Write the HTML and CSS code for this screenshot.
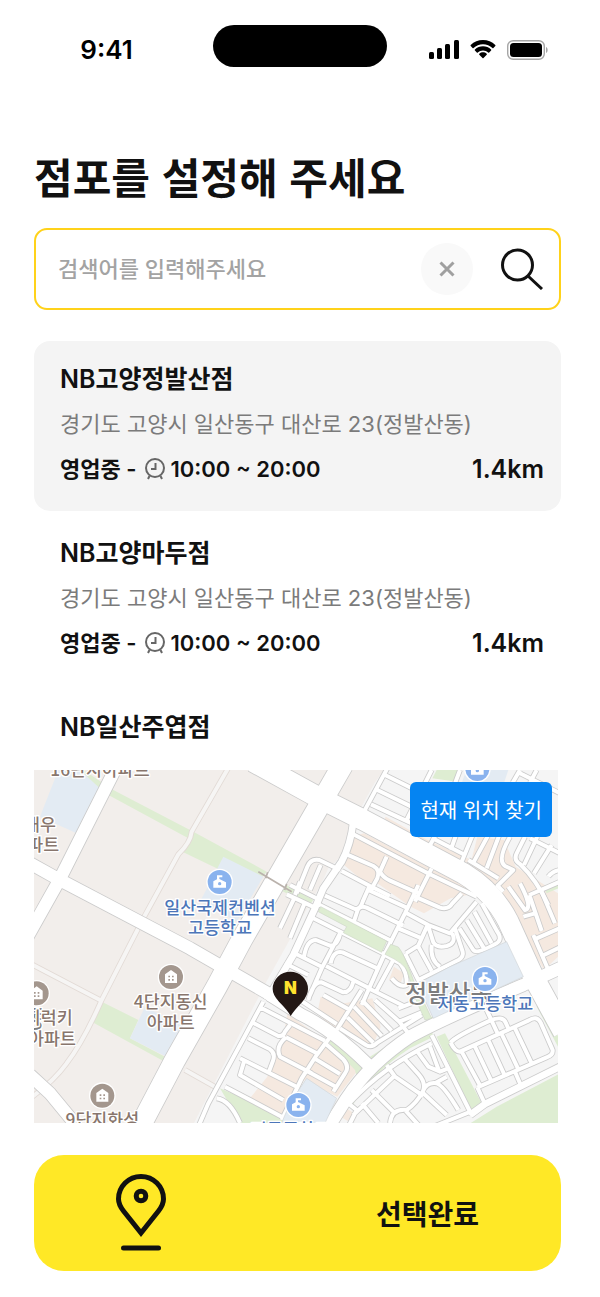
FILE: index.html
```html
<!DOCTYPE html>
<html lang="ko">
<head>
    <meta charset="UTF-8">
    <meta name="viewport" content="width=device-width, initial-scale=1.0">
    <title>점포 설정</title>
    <link rel="stylesheet" href="styles.css">
</head>
<body>

    <header class="status-bar">
        <span class="time">9:41</span>
        <span class="island"></span>
        <span class="status-icons">
            <svg width="30" height="20" viewBox="0 0 30 20">
                <rect x="0" y="12" width="5" height="7" rx="1.5"/>
                <rect x="8" y="8" width="5" height="11" rx="1.5"/>
                <rect x="16" y="4" width="5" height="15" rx="1.5"/>
                <rect x="25" y="0" width="5" height="19" rx="1.5"/>
            </svg>
            <svg width="26" height="20" viewBox="0 0 26 20">
                <path d="M13 4.2c3.6 0 6.900 1.400 9.400 3.700.3.300.7.300 1 0l1.900-1.900c.3-.3.3-.8 0-1.100C22 1.800 17.700 0 13 0S4 1.800.7 4.900c-.3.3-.3.800 0 1.100l1.900 1.900c.3.300.7.300 1 0C6.100 5.600 9.400 4.200 13 4.200z"/>
                <path d="M13 10.400c2 0 3.800.7 5.200 2 .3.300.7.300 1 0l1.900-1.900c.3-.3.3-.8 0-1.100C18.900 7.400 16.100 6.200 13 6.200S7.100 7.400 4.900 9.400c-.3.3-.3.800 0 1.100l1.900 1.900c.3.300.7.300 1 0 1.400-1.300 3.200-2 5.200-2z"/>
                <path d="M16.700 13.700c.3.300.3.800 0 1.100L13.500 18c-.3.300-.7.300-1 0l-3.200-3.200c-.3-.3-.3-.8 0-1.100 2.100-1.800 5.300-1.800 7.400 0z"/>
            </svg>
            <svg width="41" height="20" viewBox="0 0 41 20">
                <rect x="0.7" y="0.7" width="36.600" height="18.600" rx="5.500" fill="none" stroke="#a6a6a6" stroke-width="1.400"/>
                <rect x="3" y="3" width="32" height="14" rx="3.500"/>
                <path d="M39 7c2.200.8 2.200 5.200 0 6z" fill="#a6a6a6"/>
            </svg>
        </span>
    </header>

    <main class="page">
        <h1>점포를 설정해 주세요</h1>

        <form class="search">
            <input type="text" placeholder="검색어를 입력해주세요" aria-label="점포 검색">
            <button type="reset" class="clear" aria-label="지우기">
                <svg width="16" height="16" viewBox="0 0 16 16"><path d="M1.500 1.500l13 13M14.500 1.500l-13 13"/></svg>
            </button>
            <button type="submit" class="find" aria-label="검색">
                <svg width="42" height="42" viewBox="0 0 42 42"><circle cx="16.500" cy="17" r="15"/><path d="M27 28L41 41"/></svg>
            </button>
        </form>

        <ul class="stores">
            <li class="store selected">
                <h2>NB고양정발산점</h2>
                <p class="address">경기도 고양시 일산동구 대산로 23(정발산동)</p>
                <p class="info">
                    <span>영업중 -</span>
                    <svg class="clock" width="20" height="22" viewBox="0 0 20 22"><circle cx="10" cy="10" r="9"/><path d="M10.500 5v6H6M4.500 18l-1.500 3M15.500 18l1.500 3"/></svg>
                    <span>10:00 ~ 20:00</span>
                    <strong class="distance">1.4km</strong>
                </p>
            </li>
            <li class="store">
                <h2>NB고양마두점</h2>
                <p class="address">경기도 고양시 일산동구 대산로 23(정발산동)</p>
                <p class="info">
                    <span>영업중 -</span>
                    <svg class="clock" width="20" height="22" viewBox="0 0 20 22"><circle cx="10" cy="10" r="9"/><path d="M10.500 5v6H6M4.500 18l-1.500 3M15.500 18l1.500 3"/></svg>
                    <span>10:00 ~ 20:00</span>
                    <strong class="distance">1.4km</strong>
                </p>
            </li>
            <li class="store">
                <h2>NB일산주엽점</h2>
            </li>
        </ul>

        <section class="map">
            <svg viewBox="0 0 1572 1059" preserveAspectRatio="xMidYMid slice" role="img" aria-label="점포 지도">
                <defs>
                    <g id="lanes">
                        <path transform="translate(-12 -15)" d="M600 0L485 200Q482 232 445 268L340 460L215 705Q160 830 110 895Q70 950 0 1000M0 595L210 705M465 915L560 968"/>
                    </g>
                    <g id="streets">
                        <!-- north -->
                        <g transform="translate(768 0)">
                            <path d="M292 -5L222 125M285 15L400 72M262 60L375 115M243 103L365 160M425 0L350 150"/>
                            <path d="M690 0L668 38M690 10L810 70M740 0L720 38M510 0L495 40"/>
                            <path d="M440 190L412 240M425 203L525 255M500 190L482 240M548 195L515 275M535 270L625 325M595 195L550 278M628 195L590 295M660 200Q620 270 645 288L670 300L620 350"/>
                            <path d="M705 200L680 250Q670 270 690 282Q740 330 775 405M742 200L702 285M720 205L810 250M785 225L732 310M775 320Q790 300 815 300"/>
                            <path d="M190 193L418 312L560 380M425 295L375 395M170 253L250 288Q272 300 262 325L240 365M290 260L270 305Q278 322 300 332L390 372M155 303L240 348L300 378M20 370L52 290Q62 265 88 270L150 300M92 285L60 360"/>
                        </g>
                        <!-- middle -->
                        <g transform="translate(768 345)">
                            <path d="M105 32L195 72Q212 72 218 50L238 5M228 12L355 70M190 115L203 75Q210 60 230 68L340 122M85 58L305 168M70 100L285 208M385 0L345 85L280 215L215 360"/>
                            <path d="M345 82L415 120L480 145L560 50M325 130L395 160M412 122L385 182L348 205M368 32L450 68Q475 75 487 55L515 25M415 125L430 172Q440 190 470 183Q500 175 487 145"/>
                            <path d="M345 205L385 285L505 225Q522 215 518 200L495 130M385 185L425 258M425 180Q420 225 450 245M508 130L550 195Q560 208 615 178Q640 165 622 140L575 55M530 105L582 190M553 80L605 175"/>
                            <path d="M42 215Q50 165 78 165L120 182Q142 182 150 148M150 145L95 250L60 330M5 200L95 245M122 235Q130 195 158 202L262 250M108 243L235 308M55 345Q70 290 95 292L160 322Q182 322 190 290M-15 235L55 270"/>
                            <path d="M285 210L330 235Q352 262 350 300Q330 310 305 280M310 225L258 320M240 312L340 362"/>
                            <path d="M-10 28L75 68M45 52L0 160M15 35L-30 130M0 0L90 45M30 -10L15 30"/>
                            <path d="M620 0L640 20M655 5L705 75Q730 70 690 -5M730 150L775 255M718 30L755 138M718 30L810 -10M755 20L795 115M740 160L820 125M762 210L820 182M735 85L700 95"/>
                        </g>
                        <!-- south -->
                        <g transform="translate(618 690)">
                            <path d="M70 5L0 135L-95 310L-125 380M60 22L255 122M42 70L115 108Q130 110 135 95L150 75M138 112L235 162M25 115L90 148Q108 160 98 185L85 220M138 112Q105 140 120 170L215 220M0 175L170 260M12 185L0 225L130 300M-45 260L125 350M-70 295Q-30 300 0 369"/>
                            <path d="M275 105L230 165L185 235L125 360M255 130L310 178Q330 200 315 220L280 275M228 178L300 222M205 215L290 262M180 0L290 72M365 -30L290 90M330 30L250 -15"/>
                            <path d="M300 85L378 135Q395 145 412 128L545 45M322 52L400 128M342 20L425 108M365 0L455 92M405 0L478 65L505 100M475 25L540 0M478 65L550 35"/>
                            <path d="M575 105L620 195L695 345M632 128Q645 110 750 62Q790 45 798 70L808 92M632 128Q645 155 660 155L865 62Q890 45 902 68L938 150Q940 165 920 172L712 262M740 30L775 105M665 155L722 260M705 140L755 245M745 120L795 228M785 102L835 208M825 85L875 190M712 262L735 312M825 215L845 262"/>
                            <path d="M330 308Q430 200 575 130M440 195L465 230L550 288M490 172L535 222Q560 250 548 275M532 155L565 200L600 215L625 205M570 140L598 215M463 228L340 345M395 270L460 335M365 310L415 369M325 310L350 330L325 380M450 369Q455 325 500 330Q530 310 548 275Q560 245 590 250Q610 255 655 330M495 330L540 380M550 280L620 345M585 250L620 230M692 335L580 380"/>
                        </g>
                    </g>
                    <g id="roads">
                        <path transform="translate(768 0)" d="M190 155Q182 225 155 275L100 355L75 415L10 555L-70 690"/>
                        <path transform="translate(618 690)" d="M690 345L735 312L970 195"/>
                    </g>
                    <g id="avenues">
                        <path transform="translate(-12 -15)" d="M262 0L88 345L-10 520M0 295L90 345L480 550L740 700M0 930L60 985L130 1070"/>
                        <path transform="translate(768 510)" d="M-60 165L30 222Q130 270 235 375M110 570L170 475Q240 370 360 290Q460 235 700 135L820 80"/>
                    </g>
                    <g id="highways">
                        <path transform="translate(-12 -15)" d="M938 0L870 118L635 525L560 665L434 887L330 1085M670 -10L870 100"/>
                        <path transform="translate(768 -15)" d="M90 100L220 165L420 272L520 325Q610 380 655 470L730 635L820 800"/>
                    </g>
                    <g id="school">
                        <circle r="40" fill="#fff"/>
                        <circle r="36" fill="#8ab3ee"/>
                        <path d="M-19 17V-2L-8 -8V-20H8V-14H-1V-9L19 1V17Z" fill="#fff"/>
                        <circle cy="5" r="5" fill="#8ab3ee"/>
                    </g>
                    <g id="apartment">
                        <circle r="40" fill="#fff"/>
                        <circle r="36" fill="#a4978e"/>
                        <path d="M-18 18V-8L0 -21L18 -8V18Z" fill="#fff"/>
                        <path d="M-8 -4h5v5h-5zM3 -4h5v5h-5zM-8 6h5v5h-5zM3 6h5v5h-5z" fill="#a4978e"/>
                    </g>
                </defs>

                <rect width="1572" height="1059" fill="#f2eeeb"/>
                <path d="M950 135L870 325L700 630L480 1059H1572V0H1050Z" fill="#f5f5f5"/>
                <path d="M905 0H1043L980 115L905 75Z" fill="#f2eeeb"/>
                <path d="M880 130L948 165L925 245Q900 290 890 280L820 250Z" fill="#f2eeeb"/>

                <!-- shops -->
                <g fill="#f5e9e0">
                    <path d="M1055 140L1180 210L1400 310L1370 350L1040 170Z"/>
                    <path d="M990 190L1330 370L1250 385L1170 430L1130 410L1030 340L990 335L930 285L950 200Z"/>
                    <path d="M1310 280L1330 200L1410 210L1445 290L1572 370V520L1500 560L1370 350Z"/>
                    <path d="M860 680L930 700L1015 685L1040 770L1015 830L980 820L900 780L850 730Z"/>
                    <path d="M1080 590L1110 610L1100 640L1065 630Z"/>
                    <path d="M760 730L980 890L910 980L810 930L750 1040L648 985L700 920L715 860L750 790Z"/>
                    <path d="M930 1010L960 1030L945 1055L920 1040Z"/>
                    <path d="M1460 480L1572 510V560L1530 600Z"/>
                </g>
                <!-- parks -->
                <g fill="#deedd2">
                    <path transform="translate(-12 -15)" d="M160 15L250 75L490 200L710 320L695 338L560 310L460 262L475 220L245 95L150 45ZM760 355L850 405L840 420L750 375ZM215 710L325 765L300 820L405 875L400 888L185 770ZM570 970L745 1045L790 1090H640Z"/>
                    <path transform="translate(768 510)" d="M440 290L465 280L575 490L545 515ZM525 560L620 500L820 395V560ZM745 170L820 320V350L740 200ZM780 80L820 60V75Z"/>
                    <path transform="translate(768 510)" d="M185 500Q245 400 360 325L430 290L425 270L350 310Q240 370 165 490ZM125 295L220 380L200 410L195 390L115 305ZM240 350L405 245L440 220L580 200L450 265L250 365Z"/>
                    <path d="M1208 0H1273L1268 35L1195 25ZM1533 360L1573 330V355L1538 370Z"/>
                </g>
                <!-- school grounds -->
                <g fill="#e3ebf3">
                    <path transform="translate(-12 -15)" d="M85 15H150L215 75L140 205L30 155ZM580 275L700 335L620 470L510 410ZM345 725L470 790L410 875L300 820Z"/>
                    <path d="M1303 -15H1428L1408 45L1283 40Z"/>
                </g>

                <use href="#lanes" class="lane-edge"/>
                <use href="#lanes" class="lane"/>
                <use href="#streets" class="street-edge"/>
                <use href="#roads" class="road-edge"/>
                <use href="#avenues" class="avenue-edge"/>
                <use href="#highways" class="highway-edge"/>
                <use href="#streets" class="street"/>
                <use href="#roads" class="road"/>
                <use href="#avenues" class="avenue"/>
                <use href="#highways" class="highway"/>

                <!-- park between the blocks -->
                <g class="park" transform="translate(768 345)">
                    <path d="M92 65L290 168L275 202L160 143L170 125L85 80Z"/>
                    <path d="M302 178L325 186Q342 205 372 290L425 400L405 405L380 350L352 260Q345 235 285 208Z"/>
                </g>
                <g class="school-ground">
                    <path transform="translate(768 510)" d="M395 125L480 80L650 5L700 110L430 235L400 170ZM50 415L140 475L100 560H-30L0 490Z"/>
                </g>
                <path d="M673 305L773 365M695 325l6 -18M752 360l6 -18" fill="none" stroke="#bab2ac" stroke-width="5"/>

                <text class="label area" x="1244" y="695">정발산동</text>
                <text class="label area" x="0" y="772">동</text>

                <use href="#school" x="557" y="336"/>
                <use href="#school" x="1330" y="-3"/>
                <use href="#school" x="1353" y="627"/>
                <use href="#school" x="793" y="1005"/>
                <use href="#apartment" x="411" y="621"/>
                <use href="#apartment" x="8" y="670"/>
                <use href="#apartment" x="205" y="977"/>

                <g class="label blue">
                    <text x="558" y="432">일산국제컨벤션</text>
                    <text x="558" y="493">고등학교</text>
                    <text x="1354" y="721">저동고등학교</text>
                    <text x="770" y="1097">저동중학교</text>
                </g>
                <g class="label brown">
                    <text x="198" y="18">16단지아파트</text>
                    <text x="18" y="182">대우</text>
                    <text x="4" y="243">아파트</text>
                    <text x="410" y="715">4단지동신</text>
                    <text x="410" y="776">아파트</text>
                    <text x="44" y="762">지럭키</text>
                    <text x="54" y="824">아파트</text>
                    <text x="205" y="1069">9단지화성</text>
                </g>

                <path d="M770 738Q762 722 735 695Q716 675 716 657A53 52 0 0 1 822 657Q822 675 804 697Q780 722 770 738Z" fill="#231815"/>
                <text class="pin-text" x="769" y="673">N</text>
            </svg>
            <button type="button" class="locate">현재 위치 찾기</button>
        </section>

        <button type="button" class="confirm">
            <svg width="50" height="78" viewBox="0 0 50 78">
                <path d="M25 59L7.500 37C4 32.500 2.500 29 2.500 25a22.500 22.500 0 0 1 45 0c0 4-1.500 7.500-5 12z"/>
                <circle cx="25" cy="22" r="4.800"/>
                <path d="M7.500 74h35"/>
            </svg>
            <span>선택완료</span>
        </button>
    </main>

</body>
</html>
```
FILE: styles.css
```css
* {
    box-sizing: border-box;
}
body {
    margin: 0;
    background: #fff;
    color: #111;
    font-family: Inter, "Noto Sans CJK KR", sans-serif;
}
h1, h2, p, ul {
    margin: 0;
    padding: 0;
}
button {
    padding: 0;
    border: none;
    background: none;
    color: inherit;
    font-family: inherit;
    cursor: pointer;
}
svg {
    display: block;
    flex-shrink: 0;
}

/* status bar */
.status-bar {
    display: grid;
    grid-template-columns: 1fr 174px 1fr;
    align-items: center;
    padding-top: 25px;
}
.time {
    padding-top: 8px;
    text-align: center;
    font-size: 26px;
    line-height: 34px;
    font-weight: 600;
    color: #000;
}
.island {
    height: 42px;
    border-radius: 21px;
    background: #000;
}
.status-icons {
    display: flex;
    justify-content: center;
    align-items: center;
    gap: 11px;
    padding-right: 10px;
    padding-top: 8px;
}

/* page */
.page {
    padding: 85px 39px 26px 34px;
}
h1 {
    margin-bottom: 28px;
    font-size: 42px;
    line-height: 48px;
    font-weight: 600;
    font-family: "Noto Sans CJK KR", sans-serif;
}
.search {
    display: flex;
    align-items: center;
    height: 82px;
    padding: 0 16px 0 22px;
    border: 2px solid #ffd21a;
    border-radius: 13px;
}
.search input {
    flex: 1;
    min-width: 0;
    padding: 0;
    border: none;
    outline: none;
    background: none;
    font-family: inherit;
    font-size: 22px;
    font-weight: 500;
}
.search input::placeholder {
    color: #a3a3a3;
    opacity: 1;
}
.clear {
    display: grid;
    place-items: center;
    width: 52px;
    height: 52px;
    margin-right: 28px;
    border-radius: 50%;
    background: #f9f9f9;
}
.clear path {
    stroke: #a0a0a0;
    stroke-width: 3;
}
.find svg {
    fill: none;
    stroke: #111;
    stroke-width: 3;
}

/* store list */
.stores {
    display: flex;
    flex-direction: column;
    gap: 4px;
    height: 429px;
    margin-top: 31px;
    overflow-y: auto;
    scrollbar-width: none;
    list-style: none;
}
.store {
    display: flex;
    flex-direction: column;
    gap: 15px;
    padding: 23px 17px 27px 26px;
    border-radius: 16px;
    line-height: 30px;
}
.store.selected {
    background: #f4f4f4;
}
.store h2 {
    font-size: 25px;
    line-height: 30px;
    font-weight: 600;
}
.address {
    color: #7b7b7b;
    font-size: 22px;
}
.info {
    display: flex;
    align-items: center;
    font-size: 22px;
    font-weight: 600;
}
.clock {
    margin: 0 6px 0 8px;
    fill: none;
    stroke: #666;
    stroke-width: 2;
}
.distance {
    margin-left: auto;
    font-size: 25px;
    font-weight: 600;
}

/* map */
.map {
    position: relative;
    margin-right: 3px;
    aspect-ratio: 524 / 353;
    overflow: hidden;
}
.map > svg {
    width: 100%;
    height: 100%;
}
.lane, .lane-edge, .street, .street-edge, .road, .road-edge,
.avenue, .avenue-edge, .highway, .highway-edge {
    fill: none;
    stroke: #fff;
    stroke-linejoin: round;
}
.lane-edge {
    stroke: #e2dad5;
    stroke-width: 17px;
}
.lane {
    stroke: #f6f5f4;
    stroke-width: 12px;
}
.street-edge, .road-edge, .avenue-edge, .highway-edge {
    stroke: #cbcbcb;
}
.street-edge { stroke-width: 17px; }
.street { stroke-width: 12px; }
.road-edge { stroke-width: 25px; }
.road { stroke-width: 20px; }
.avenue-edge { stroke-width: 42px; }
.avenue { stroke-width: 37px; }
.highway-edge { stroke-width: 67px; }
.highway { stroke-width: 62px; }
.park {
    fill: #deedd2;
    stroke: #cfd6c8;
    stroke-width: 2px;
}
.school-ground {
    fill: #e3ebf3;
    stroke: #d0d4d8;
    stroke-width: 2px;
}
.label {
    font-family: "Noto Sans CJK KR", sans-serif;
    font-size: 52px;
    font-weight: 500;
    text-anchor: middle;
    stroke: #fff;
    stroke-width: 8px;
    stroke-linejoin: round;
    paint-order: stroke;
}
.blue { fill: #4c76b9; }
.brown { fill: #88766d; }
.area {
    fill: #7d7d7d;
    font-size: 71px;
}
.pin-text {
    font-size: 50px;
    font-weight: 900;
    text-anchor: middle;
    fill: #ffe32e;
}
.locate {
    position: absolute;
    top: 12px;
    right: 6px;
    padding: 0 10px;
    border-radius: 6px;
    background: #0584f2;
    color: #fff;
    font-family: "Noto Sans CJK KR", sans-serif;
    font-size: 20px;
    line-height: 55px;
}

/* confirm */
.confirm {
    display: flex;
    justify-content: space-between;
    align-items: center;
    width: 100%;
    height: 116px;
    margin-top: 32px;
    padding: 0 82px;
    border-radius: 30px;
    background: #ffe826;
    font-size: 28px;
    font-weight: 600;
}
.confirm svg {
    fill: none;
    stroke: #111;
    stroke-width: 5;
    stroke-linecap: round;
}
```
